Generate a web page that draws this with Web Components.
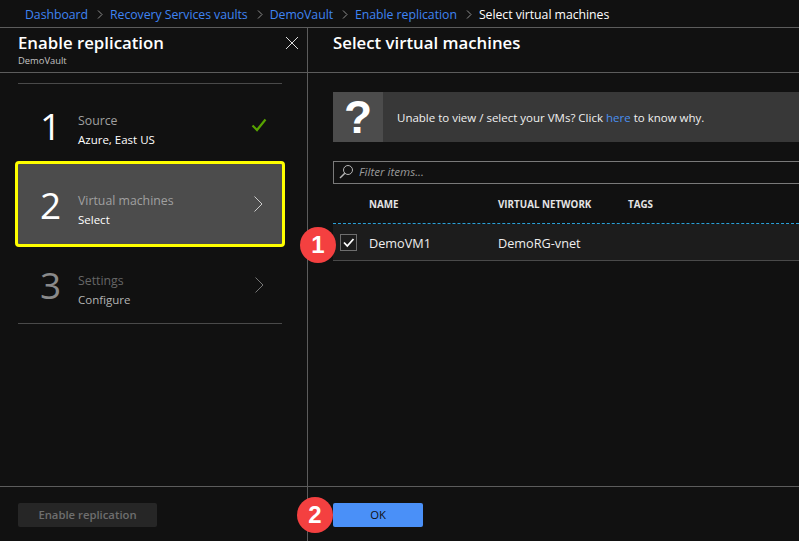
<!DOCTYPE html>
<html>
<head>
<meta charset="utf-8">
<style>
html, body { margin: 0; height: 100%; background: #111; overflow: hidden; }
body { font-family: "Open Sans", "Noto Sans", sans-serif; color: #fff; }
</style>
</head>
<body>
<portal-blades></portal-blades>
<script>
class CrumbBar extends HTMLElement {
    constructor() {
        super();
        this.attachShadow({ mode: 'open' });
        this.shadowRoot.innerHTML = `
            <style>
                :host { display: flex; align-items: center; height: 28px; box-sizing: border-box; padding: 2px 0 0 25px; border-bottom: 1px solid #5c5c5c; font-size: 12.3px; white-space: nowrap; color: #fff; letter-spacing: -0.05px; }
                a { color: #3f84f3; text-decoration: none; }
                svg { width: 6px; height: 9px; margin: 0 7px 0 9px; fill: none; stroke: #8e8e8e; stroke-width: 1; }
            </style>
            <span id="items"></span>
        `;
    }

    connectedCallback() {
        const items = this.getAttribute('items').split('|');
        const last = items.pop();
        const sep = '<svg viewBox="0 0 6 9"><path d="M1 .5 5 4.5 1 8.5"/></svg>';
        this.shadowRoot.getElementById('items').innerHTML =
            items.map(i => `<a href="#">${i}</a>${sep}`).join('') + `<span>${last}</span>`;
    }
}
customElements.define('crumb-bar', CrumbBar);

class WizardStep extends HTMLElement {
    constructor() {
        super();
        this.attachShadow({ mode: 'open' });
        this.shadowRoot.innerHTML = `
            <style>
                :host { display: flex; align-items: center; box-sizing: border-box; height: 76px; margin: 0 3px; padding-left: 22px; }
                :host([done]) { height: 77px; padding-top: 5px; }
                :host([active]) { height: 86px; margin: 0; background: #4c4c4c; border: 3px solid #ffff00; border-radius: 4px; }
                .num { width: 38px; font-size: 37px; line-height: 1; font-weight: 500; }
                :host([dim]) .num { color: #8a8a8a; margin-top: -2px; }
                .text { flex: 1; display: flex; flex-direction: column; gap: 2px; margin-top: 10px; }
                :host([active]) .text { margin-top: 12px; }
                .title { font-size: 12.3px; line-height: 17px; color: #a0a0a0; }
                :host([dim]) .title { color: #666; }
                .sub { font-size: 11.5px; line-height: 17px; color: #fff; }
                :host([dim]) .sub { color: #b4b4b4; }
                .icon { width: 16px; height: 16px; margin-right: 15px; }
                :host([active]) .icon { margin-right: 16px; }
                svg { display: block; width: 16px; height: 16px; fill: none; }
            </style>
            <div class="num"></div>
            <div class="text"><div class="title"></div><div class="sub"></div></div>
            <div class="icon"></div>
        `;
    }

    connectedCallback() {
        const s = this.shadowRoot;
        s.querySelector('.num').textContent = this.getAttribute('num');
        s.querySelector('.title').textContent = this.getAttribute('title');
        s.querySelector('.sub').textContent = this.getAttribute('sub');
        s.querySelector('.icon').innerHTML = this.hasAttribute('done')
            ? '<svg viewBox="0 0 16 16"><path d="M1.5 8.5 6 13 14.500 2.500" stroke="#57a300" stroke-width="2.200"/></svg>'
            : `<svg viewBox="0 0 16 16"><path d="M4.500 .5 12 8 4.500 15.500" stroke="${this.hasAttribute('dim') ? '#777' : '#ccc'}" stroke-width="1"/></svg>`;
    }
}
customElements.define('wizard-step', WizardStep);

class NoticeBar extends HTMLElement {
    constructor() {
        super();
        this.attachShadow({ mode: 'open' });
        this.shadowRoot.innerHTML = `
            <style>
                :host { display: flex; height: 50px; background: #383838; align-items: center; font-size: 11.5px; color: #f0f0f0; white-space: nowrap; }
                .q { width: 50px; height: 50px; flex: none; background: #4c4c4c; color: #fff; margin-right: 14px; display: flex; align-items: center; justify-content: center; font-family: "Liberation Sans", sans-serif; font-weight: 700; font-size: 46px; line-height: 1; }
                ::slotted(a) { color: #4a90f0; text-decoration: none; }
            </style>
            <div class="q">?</div>
            <span><slot></slot></span>
        `;
    }
}
customElements.define('notice-bar', NoticeBar);

class FilterBox extends HTMLElement {
    constructor() {
        super();
        this.attachShadow({ mode: 'open' });
        this.shadowRoot.innerHTML = `
            <style>
                :host { display: flex; align-items: center; gap: 5px; height: 23px; box-sizing: border-box; border: 1px solid #7a7a7a; border-right: 0; padding: 0 0 2px 5px; font-size: 11.6px; font-style: italic; color: #9a9a9a; }
                svg { width: 15px; height: 15px; fill: none; stroke: #b5b5b5; stroke-width: 1; }
            </style>
            <svg viewBox="0 0 15 15"><circle cx="9" cy="6" r="4.500"/><path d="M5.800 9.200 1 14" stroke-width="1.500"/></svg>
            <span>Filter items...</span>
        `;
    }
}
customElements.define('filter-box', FilterBox);

class VmTable extends HTMLElement {
    constructor() {
        super();
        this.attachShadow({ mode: 'open' });
        this.shadowRoot.innerHTML = `
            <style>
                :host { display: block; }
                .row { display: grid; grid-template-columns: 36px 129px 130px 1fr; align-items: center; }
                .head { height: 40px; font-size: 9.8px; font-weight: 700; color: #e4e4e4; border-bottom: 1px dashed #2aa0d8; box-sizing: border-box; padding-top: 2px; }
                .body { height: 37px; box-sizing: border-box; padding-top: 1px; background: #1c1c1c; font-size: 12.7px; color: #eee; border-bottom: 1px solid #4a4a4a; }
                .box { width: 17px; height: 17px; box-sizing: border-box; margin-left: 7px; border: 1px solid #6e6e6e; }
                svg { display: block; width: 15px; height: 15px; fill: none; stroke: #fff; stroke-width: 1.800; }
            </style>
            <div class="row head"><span></span><span>NAME</span><span>VIRTUAL NETWORK</span><span>TAGS</span></div>
            <div class="row body">
                <div class="box"><svg viewBox="0 0 15 15"><path d="M3 7.500 6.300 11 12.500 4"/></svg></div>
                <span>DemoVM1</span><span>DemoRG-vnet</span><span></span>
            </div>
        `;
    }
}
customElements.define('vm-table', VmTable);

class CountBadge extends HTMLElement {
    constructor() {
        super();
        this.attachShadow({ mode: 'open' });
        this.shadowRoot.innerHTML = `
            <style>
                :host { position: absolute; width: 36px; height: 36px; border-radius: 50%; background: #f44040; color: #fff; display: flex; align-items: center; justify-content: center; font-family: "Liberation Sans", sans-serif; font-size: 24px; font-weight: 700; }
            </style>
            <slot></slot>
        `;
    }
}
customElements.define('count-badge', CountBadge);

class BladeHead extends HTMLElement {
    constructor() {
        super();
        this.attachShadow({ mode: 'open' });
        this.shadowRoot.innerHTML = `
            <style>
                :host { display: flex; justify-content: space-between; box-sizing: border-box; height: 45px; border-bottom: 1px solid #5c5c5c; }
                h2 { margin: 4px 0 0; font-size: 16.8px; line-height: 22px; font-weight: 600; color: #fff; white-space: nowrap; }
                small { display: block; margin-top: 1px; font-size: 9.4px; line-height: 12px; color: #c4c4c4; }
            </style>
            <div><h2></h2><small></small></div>
            <slot></slot>
        `;
    }

    connectedCallback() {
        this.shadowRoot.querySelector('h2').textContent = this.getAttribute('heading');
        this.shadowRoot.querySelector('small').textContent = this.getAttribute('sub') || '';
    }
}
customElements.define('blade-head', BladeHead);

class PortalBlades extends HTMLElement {
    constructor() {
        super();
        this.attachShadow({ mode: 'open' });
        this.shadowRoot.innerHTML = `
            <style>
                :host { display: flex; flex-direction: column; position: relative; width: 799px; height: 541px; overflow: hidden; background: #111; }
                .blades { flex: 1; display: flex; min-height: 0; }
                .left { width: 307px; flex: none; display: flex; flex-direction: column; border-right: 1px solid #5c5c5c; box-sizing: content-box; }
                .right { flex: 1; display: flex; flex-direction: column; min-width: 0; }
                .left blade-head { padding: 0 9px 0 18px; }
                .right blade-head { padding-left: 25px; }
                .close { margin-top: 9px; width: 12px; height: 12px; fill: none; stroke: #ddd; stroke-width: 1; }
                .steps { flex: 1; padding: 10px 22px 0 15px; }
                .rule { height: 1px; background: #4a4a4a; margin: 0 0 0 3px; width: 264px; }
                .foot { height: 55px; flex: none; box-sizing: border-box; border-top: 1px solid #5c5c5c; }
                .left .foot { padding: 16px 0 0 18px; }
                .right .foot { padding: 16px 0 0 25px; }
                button { display: block; height: 24px; border: 0; border-radius: 2px; font: 600 11.300px "Open Sans", sans-serif; padding: 0 0 2px; }
                .off { width: 139px; background: #262626; color: #6e6e6e; }
                .ok { width: 90px; background: #4a90f8; color: #111; font-weight: 400; }
                .pane { flex: 1; padding: 19px 0 0 25px; min-height: 0; }
                notice-bar { margin-bottom: 19px; }
            </style>
            <crumb-bar items="Dashboard|Recovery Services vaults|DemoVault|Enable replication|Select virtual machines"></crumb-bar>
            <div class="blades">
                <section class="left">
                    <blade-head heading="Enable replication" sub="DemoVault">
                        <svg class="close" viewBox="0 0 12 12"><path d="M0 0 12 12M12 0 0 12"/></svg>
                    </blade-head>
                    <div class="steps">
                        <div class="rule"></div>
                        <wizard-step num="1" title="Source" sub="Azure, East US" done></wizard-step>
                        <wizard-step num="2" title="Virtual machines" sub="Select" active></wizard-step>
                        <wizard-step num="3" title="Settings" sub="Configure" dim></wizard-step>
                        <div class="rule"></div>
                    </div>
                    <div class="foot"><button class="off">Enable replication</button></div>
                </section>
                <section class="right">
                    <blade-head heading="Select virtual machines"></blade-head>
                    <div class="pane">
                        <notice-bar>Unable to view / select your VMs? Click <a href="#">here</a> to know why.</notice-bar>
                        <filter-box></filter-box>
                        <vm-table></vm-table>
                    </div>
                    <div class="foot"><button class="ok">OK</button></div>
                </section>
            </div>
            <count-badge style="left:300px;top:227px">1</count-badge>
            <count-badge style="left:297px;top:497px">2</count-badge>
        `;
    }
}
customElements.define('portal-blades', PortalBlades);
</script>
</body>
</html>
